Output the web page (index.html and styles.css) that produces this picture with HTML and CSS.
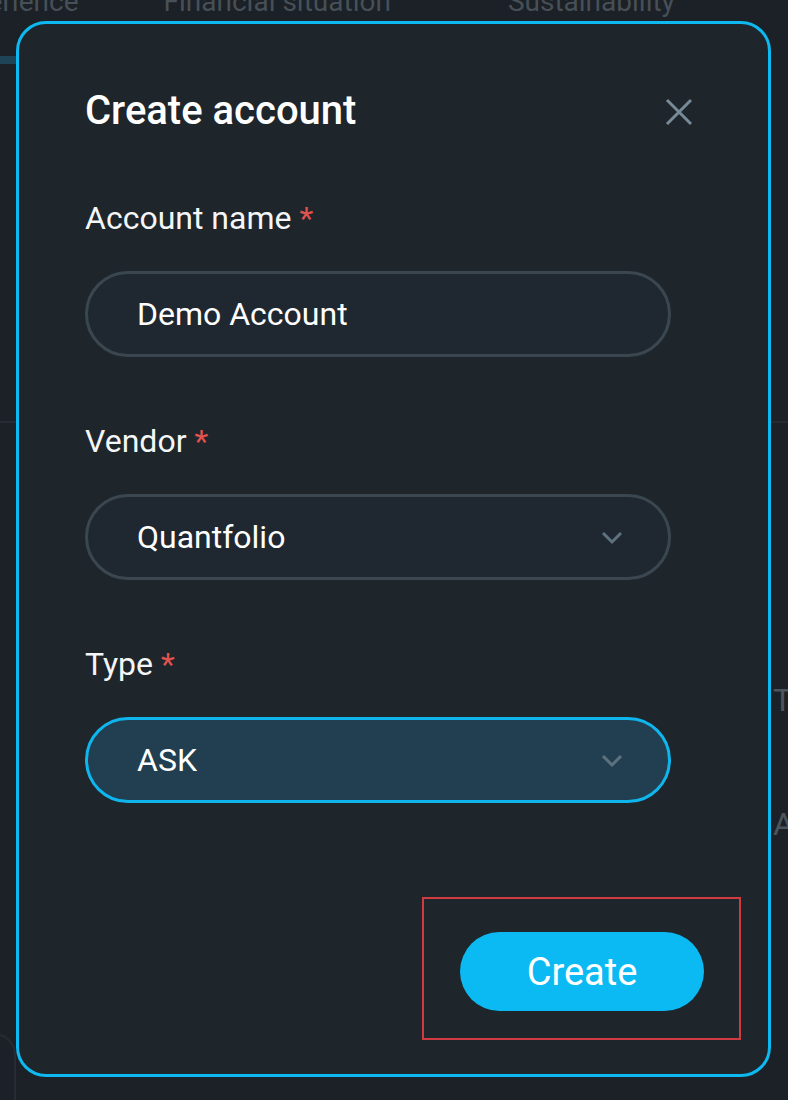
FILE: index.html
```html
<!DOCTYPE html>
<html lang="en">
<head>
    <meta charset="UTF-8">
    <title>Create account</title>
    <link rel="stylesheet" href="styles.css">
</head>

<body>
    <!-- page behind the dialog -->
    <div class="backdrop">
        <nav class="tabs">
            <span class="tab tab-active">Experience</span>
            <span class="tab">Financial situation</span>
            <span class="tab">Sustainability</span>
        </nav>
        <div class="tab-bar"></div>
        <div class="divider"></div>
        <div class="side-form">
            <span class="side-label">Type</span>
            <span class="side-value">ASK</span>
        </div>
        <div class="side-card"></div>
    </div>

    <!-- create account dialog -->
    <div class="modal">
        <div class="modal-head">
            <h1>Create account</h1>
            <button class="close" aria-label="Close">
                <svg width="28" height="28" viewBox="0 0 28 28">
                    <path d="M2 2 L26 26 M26 2 L2 26" stroke="#778a97" stroke-width="3" fill="none"/>
                </svg>
            </button>
        </div>

        <div class="field">
            <label>Account name <span class="req">*</span></label>
            <div class="input">Demo Account</div>
        </div>

        <div class="field">
            <label>Vendor <span class="req">*</span></label>
            <div class="input select">
                Quantfolio
                <svg class="chevron" width="22" height="14" viewBox="0 0 22 14">
                    <path d="M2 2 L11 11 L20 2" stroke="#5e717e" stroke-width="3" fill="none"/>
                </svg>
            </div>
        </div>

        <div class="field">
            <label>Type <span class="req">*</span></label>
            <div class="input select focused">
                ASK
                <svg class="chevron" width="22" height="14" viewBox="0 0 22 14">
                    <path d="M2 2 L11 11 L20 2" stroke="#5e717e" stroke-width="3" fill="none"/>
                </svg>
            </div>
        </div>

        <div class="modal-foot">
            <div class="highlight">
                <button class="create">Create</button>
            </div>
        </div>
    </div>
</body>
</html>
```

FILE: styles.css
```css
body {
    margin: 0;
    height: 1100px;
    overflow: hidden;
    font-family: Roboto, "Liberation Sans", sans-serif;
    background-color: #1b2126;
    color: #fff;
    position: relative;
}

/* dimmed page */
.backdrop {
    height: 1100px;
}
.tabs {
    display: flex;
    margin-top: -18px;
    margin-left: -58px;
    font-size: 28px;
    line-height: 40px;
    color: #474f57;
    white-space: nowrap;
}
.tab {
    margin-right: 85px;
}
.tab:nth-child(2) {
    margin-right: 117px;
}
.tab-bar {
    width: 60px;
    height: 8px;
    margin-top: 34px;
    background: #1d4557;
}
.divider {
    height: 2px;
    margin-top: 357px;
    background: #252c33;
}
.side-form {
    display: flex;
    flex-direction: column;
    margin-left: 773px;
    margin-top: 258px;
    font-size: 32px;
    color: #4c555d;
    gap: 86px;
}
.side-card {
    width: 40px;
    height: 120px;
    margin-left: -28px;
    margin-top: 190px;
    border: 2px solid #252c33;
    border-radius: 24px;
}

/* dialog */
.modal {
    position: absolute;
    left: 16px;
    top: 21px;
    width: 749px;
    height: 1050px;
    box-sizing: content-box;
    border: 3px solid #0db9f0;
    border-radius: 30px;
    background: #1e252b;
}
.modal-head {
    display: flex;
    align-items: center;
    justify-content: space-between;
    margin: 63px 75px 0 66px;
}
h1 {
    margin: 0;
    font-size: 40px;
    line-height: 48px;
    font-weight: 500;
    color: #fff;
}
.close {
    background: none;
    border: none;
    padding: 0;
    width: 28px;
    height: 28px;
    margin-top: 2px;
}
.close svg {
    display: block;
}

.field {
    margin: 63px 0 0 66px;
    width: 586px;
}
.field + .field {
    margin-top: 64px;
}
label {
    display: block;
    font-size: 32px;
    line-height: 40px;
    color: #f4f6f7;
}
.req {
    color: #e2524f;
}
.input {
    display: flex;
    align-items: center;
    justify-content: space-between;
    box-sizing: border-box;
    height: 86px;
    margin-top: 33px;
    padding: 0 45px 0 49px;
    border: 3px solid #3b4750;
    border-radius: 43px;
    background: #1f2830;
    font-size: 32px;
    color: #fff;
}
.input.focused {
    border-color: #0fb6ee;
    background: #213f51;
}
.chevron {
    display: block;
    margin-top: 2px;
}

.modal-foot {
    display: flex;
    justify-content: flex-end;
    margin: 94px 27px 0 0;
}
.highlight {
    border: 2px solid #d23a41;
    padding: 33px 35px 27px 36px;
}
.create {
    display: block;
    width: 244px;
    height: 79px;
    border: none;
    border-radius: 40px;
    background: #0cbaf3;
    color: #fff;
    font-family: Roboto, "Liberation Sans", sans-serif;
    font-size: 38px;
}
```
